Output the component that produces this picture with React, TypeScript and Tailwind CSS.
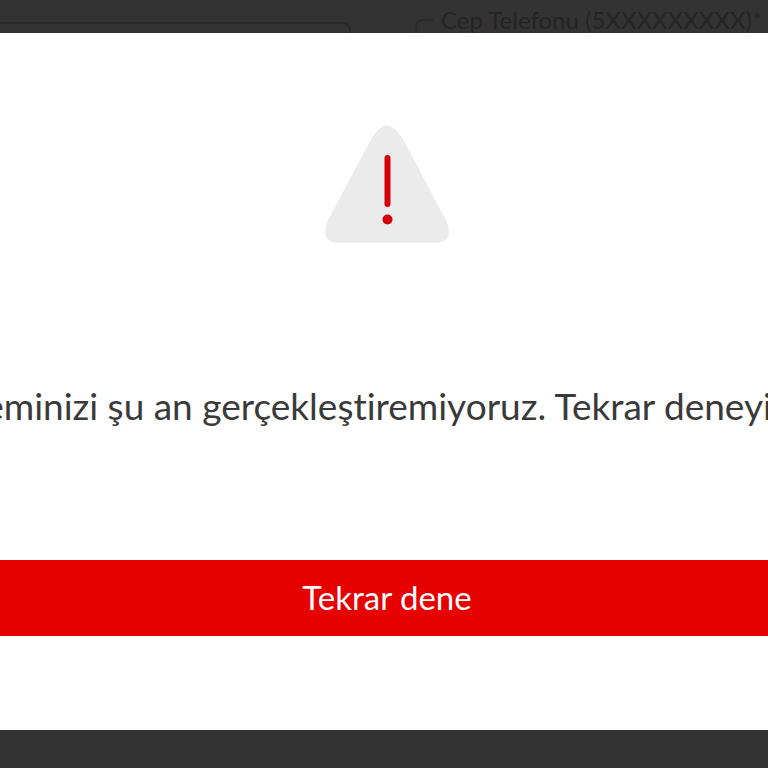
// Error modal shown over the dimmed form, with a single retry action.

function WarningIcon() {
  return (
    <svg viewBox="0 0 126 120" className="w-[126px] h-[120px]" aria-hidden="true">
      <path
        d="M54 6Q63 -3 72 6Q77 11 81 19L123 98Q130 118 112 119H14Q-4 118 3 98L45 19Q49 11 54 6Z"
        fill="#ebebeb"
      />
      <path d="M63.500 34V80" stroke="#d5000a" strokeWidth="6" strokeLinecap="round" />
      <circle cx="63.500" cy="95.500" r="5" fill="#d5000a" />
    </svg>
  );
}

function DimmedForm() {
  return (
    <div className="flex h-[33px] gap-16 overflow-hidden text-[#242424]" aria-hidden="true">
      <div className="mt-[22px] h-16 w-[351px] shrink-0 rounded-tr-lg border-t-2 border-r-2 border-[#292929]" />
      <fieldset className="mt-2 h-20 flex-1 rounded-tl-lg border-t-2 border-l-2 border-[#292929] pl-4">
        <legend className="px-2 text-2xl leading-6 whitespace-nowrap">
          Cep Telefonu (5XXXXXXXXX)*
        </legend>
      </fieldset>
    </div>
  );
}

export default function App() {
  return (
    <div className="min-h-screen overflow-hidden bg-[#333333] font-['Lato',sans-serif] [font-variant-ligatures:none]">
      <DimmedForm />
      <div
        role="alertdialog"
        aria-modal="true"
        aria-labelledby="error-message"
        className="flex flex-col bg-white pt-[91px] pb-[94px]"
      >
        <div className="flex justify-center pl-[6px]">
          <WarningIcon />
        </div>
        <div className="mt-[136px] flex justify-center overflow-hidden pr-3">
          <p
            id="error-message"
            className="shrink-0 text-[37px] leading-[52px] whitespace-nowrap text-[#3a3a3a]"
          >
            eminizi şu an gerçekleştiremiyoruz. Tekrar deneyi
          </p>
        </div>
        <button
          type="button"
          className="mt-[128px] h-[76px] w-full bg-[#e60000] pb-[2px] pl-[6px] text-[33px] leading-10 text-white"
        >
          Tekrar dene
        </button>
      </div>
    </div>
  );
}
